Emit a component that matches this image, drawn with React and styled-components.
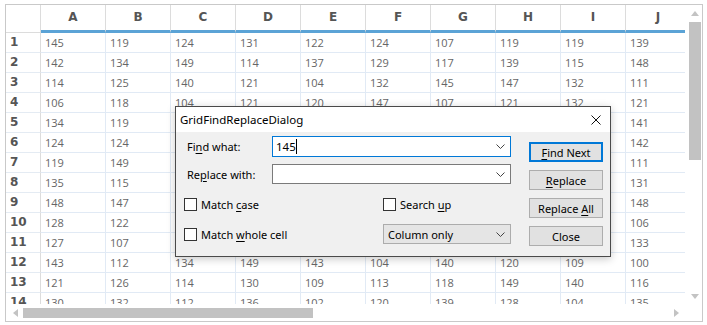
import React from "react";
import styled, { createGlobalStyle } from "styled-components";

const GlobalStyle = createGlobalStyle`
  body {
    margin: 0;
    background: #ffffff;
  }
  * {
    box-sizing: border-box;
  }
`;

const columns = ["A", "B", "C", "D", "E", "F", "G", "H", "I", "J"];

const data = [
  [145, 119, 124, 131, 122, 124, 107, 119, 119, 139],
  [142, 134, 149, 114, 137, 129, 117, 139, 115, 148],
  [114, 125, 140, 121, 104, 132, 145, 147, 132, 111],
  [106, 118, 104, 121, 120, 147, 107, 121, 132, 121],
  [134, 119, 128, 110, 139, 102, 126, 133, 117, 141],
  [124, 124, 113, 146, 105, 138, 119, 101, 127, 142],
  [119, 149, 136, 122, 148, 111, 130, 144, 108, 111],
  [135, 115, 101, 137, 116, 125, 142, 112, 139, 131],
  [148, 147, 120, 109, 131, 146, 103, 128, 114, 148],
  [128, 122, 143, 127, 112, 118, 137, 106, 145, 106],
  [127, 107, 115, 140, 124, 133, 110, 149, 121, 133],
  [143, 112, 134, 149, 143, 104, 140, 120, 109, 100],
  [121, 126, 114, 130, 109, 113, 118, 149, 140, 116],
  [130, 132, 112, 136, 102, 120, 139, 128, 104, 135],
];

const Page = styled.div`
  padding: 4px 0 0 5px;
`;

const GridFrame = styled.div`
  position: relative;
  width: 698px;
  height: 318px;
  border: 1px solid #c9c9c9;
  background: #ffffff;
  display: grid;
  grid-template-columns: 1fr 17px;
  grid-template-rows: 1fr 17px;
`;

const Viewport = styled.div`
  overflow: hidden;
`;

const Sheet = styled.div`
  display: grid;
  grid-template-columns: 35px repeat(10, 65px);
  grid-template-rows: 28px;
  grid-auto-rows: 20px;
  width: max-content;
`;

const CornerCell = styled.div`
  border-right: 1px solid #dcdcdc;
  border-bottom: 1px solid #dcdcdc;
`;

const ColHeader = styled.div`
  border-right: 1px solid #dcdcdc;
  border-bottom: 3px solid #5ba3d6;
  font: bold 12px "DejaVu Sans", Verdana, sans-serif;
  color: #555555;
  text-align: center;
  line-height: 25px;
`;

const RowHeader = styled.div`
  border-right: 1px solid #dcdcdc;
  border-bottom: 1px solid #e4ebf3;
  padding-left: 4px;
  font: bold 12px "DejaVu Sans", Verdana, sans-serif;
  color: #555555;
  line-height: 19px;
`;

const Cell = styled.div`
  border-right: 1px solid #e1eaf5;
  border-bottom: 1px solid #e1eaf5;
  padding-left: 4px;
  font: 11px "Open Sans", "Noto Sans", sans-serif;
  color: #666666;
  line-height: 19px;
  white-space: nowrap;
`;

const VScroll = styled.div`
  display: flex;
  flex-direction: column;
  align-items: center;
  padding: 6px 0 5px 2px;
`;

const HScroll = styled.div`
  display: flex;
  align-items: center;
  padding: 0 6px 0 7px;
`;

const Corner = styled.div``;

const Arrow = styled.span`
  width: 0;
  height: 0;
  border-style: solid;
  border-color: transparent;
  ${({ $dir }) =>
    $dir === "up"
      ? "border-width: 0 4px 5px 4px; border-bottom-color: #c3c3c3;"
      : $dir === "down"
      ? "border-width: 5px 4px 0 4px; border-top-color: #c3c3c3;"
      : $dir === "left"
      ? "border-width: 4px 5px 4px 0; border-right-color: #c3c3c3;"
      : "border-width: 4px 0 4px 5px; border-left-color: #c3c3c3;"}
`;

const VThumb = styled.div`
  width: 12px;
  height: 138px;
  margin-top: 6px;
  background: #c2c2c2;
`;

const HThumb = styled.div`
  height: 10px;
  width: 290px;
  margin-left: 5px;
  background: #c2c2c2;
`;

const Spacer = styled.div`
  flex: 1;
`;

const Dialog = styled.div`
  position: absolute;
  left: 169px;
  top: 101px;
  width: 436px;
  height: 151px;
  border: 1px solid #4a4a4a;
  background: #f0f0f0;
  box-shadow: 0 2px 8px rgba(0, 0, 0, 0.22);
  display: flex;
  flex-direction: column;
  font: 11px "Noto Sans", "Open Sans", sans-serif;
  color: #000000;
`;

const TitleBar = styled.div`
  height: 25px;
  background: #ffffff;
  display: flex;
  align-items: center;
  justify-content: space-between;
  padding: 0 9px 0 4px;
  font-size: 11.5px;
`;

const CloseIcon = () => (
  <svg width="10" height="10" viewBox="0 0 10 10">
    <path d="M0.5 0.5 L9.5 9.5 M9.5 0.5 L0.5 9.5" stroke="#111" strokeWidth="1" />
  </svg>
);

const DialogBody = styled.div`
  flex: 1;
  display: flex;
  padding: 4px 0 0 8px;
`;

const Form = styled.div`
  width: 327px;
  display: flex;
  flex-direction: column;
`;

const FieldRow = styled.div`
  display: grid;
  grid-template-columns: 88px 239px;
  align-items: center;
  margin-bottom: 7px;
`;

const Label = styled.span`
  padding-left: 3px;
`;

const Key = styled.u`
  text-decoration: underline;
  text-underline-offset: 2px;
`;

const TextBox = styled.div`
  height: ${({ $focused }) => ($focused ? "21px" : "20px")};
  background: #ffffff;
  border: 1px solid ${({ $focused }) => ($focused ? "#0078d7" : "#7a7a7a")};
  display: flex;
  align-items: center;
  padding: 0 5px 0 3px;
`;

const Value = styled.span`
  border-right: 1px solid #000;
  line-height: 15px;
  font-size: 11.5px;
`;

const Chevron = () => (
  <svg width="9" height="5" viewBox="0 0 9 5" style={{ marginLeft: "auto" }}>
    <path d="M0.5 0.5 L4.5 4.5 L8.5 0.5" stroke="#444" strokeWidth="1" fill="none" />
  </svg>
);

const Options = styled.div`
  display: grid;
  grid-template-columns: 199px 128px;
  grid-auto-rows: 20px;
  row-gap: 10px;
  margin-top: 3px;
`;

const CheckLabel = styled.label`
  display: flex;
  align-items: center;
  gap: 4px;
`;

const Box = styled.span`
  width: 13px;
  height: 13px;
  border: 1px solid #333333;
  background: #ffffff;
`;

const Combo = styled.div`
  height: 20px;
  background: #e5e5e5;
  border: 1px solid #acacac;
  display: flex;
  align-items: center;
  padding: 0 5px 0 4px;
`;

const Buttons = styled.div`
  display: flex;
  flex-direction: column;
  gap: 8px;
  margin: 6px 0 0 18px;
`;

const Button = styled.div`
  width: 74px;
  height: 20px;
  background: #e1e1e1;
  border: ${({ $default }) => ($default ? "2px solid #0078d7" : "1px solid #adadad")};
  display: flex;
  align-items: center;
  justify-content: center;
`;

export default function App() {
  return (
    <Page>
      <GlobalStyle />
      <GridFrame>
        <Viewport>
          <Sheet>
            <CornerCell />
            {columns.map((c) => (
              <ColHeader key={c}>{c}</ColHeader>
            ))}
            {data.map((row, r) => (
              <React.Fragment key={r}>
                <RowHeader>{r + 1}</RowHeader>
                {row.map((v, c) => (
                  <Cell key={c}>{v}</Cell>
                ))}
              </React.Fragment>
            ))}
          </Sheet>
        </Viewport>
        <VScroll>
          <Arrow $dir="up" />
          <VThumb />
          <Spacer />
          <Arrow $dir="down" />
        </VScroll>
        <HScroll>
          <Arrow $dir="left" />
          <HThumb />
          <Spacer />
          <Arrow $dir="right" />
        </HScroll>
        <Corner />

        <Dialog>
          <TitleBar>
            <span>GridFindReplaceDialog</span>
            <CloseIcon />
          </TitleBar>
          <DialogBody>
            <Form>
              <FieldRow>
                <Label>
                  Fi<Key>n</Key>d what:
                </Label>
                <TextBox $focused>
                  <Value>145</Value>
                  <Chevron />
                </TextBox>
              </FieldRow>
              <FieldRow>
                <Label>
                  Re<Key>p</Key>lace with:
                </Label>
                <TextBox>
                  <Chevron />
                </TextBox>
              </FieldRow>
              <Options>
                <CheckLabel>
                  <Box />
                  <span>
                    Match <Key>c</Key>ase
                  </span>
                </CheckLabel>
                <CheckLabel>
                  <Box />
                  <span>
                    Search <Key>u</Key>p
                  </span>
                </CheckLabel>
                <CheckLabel>
                  <Box />
                  <span>
                    Match <Key>w</Key>hole cell
                  </span>
                </CheckLabel>
                <Combo>
                  <span>Column only</span>
                  <Chevron />
                </Combo>
              </Options>
            </Form>
            <Buttons>
              <Button $default>
                <span>
                  <Key>F</Key>ind Next
                </span>
              </Button>
              <Button>
                <span>
                  <Key>R</Key>eplace
                </span>
              </Button>
              <Button>
                <span>
                  Replace <Key>A</Key>ll
                </span>
              </Button>
              <Button>Close</Button>
            </Buttons>
          </DialogBody>
        </Dialog>
      </GridFrame>
    </Page>
  );
}
